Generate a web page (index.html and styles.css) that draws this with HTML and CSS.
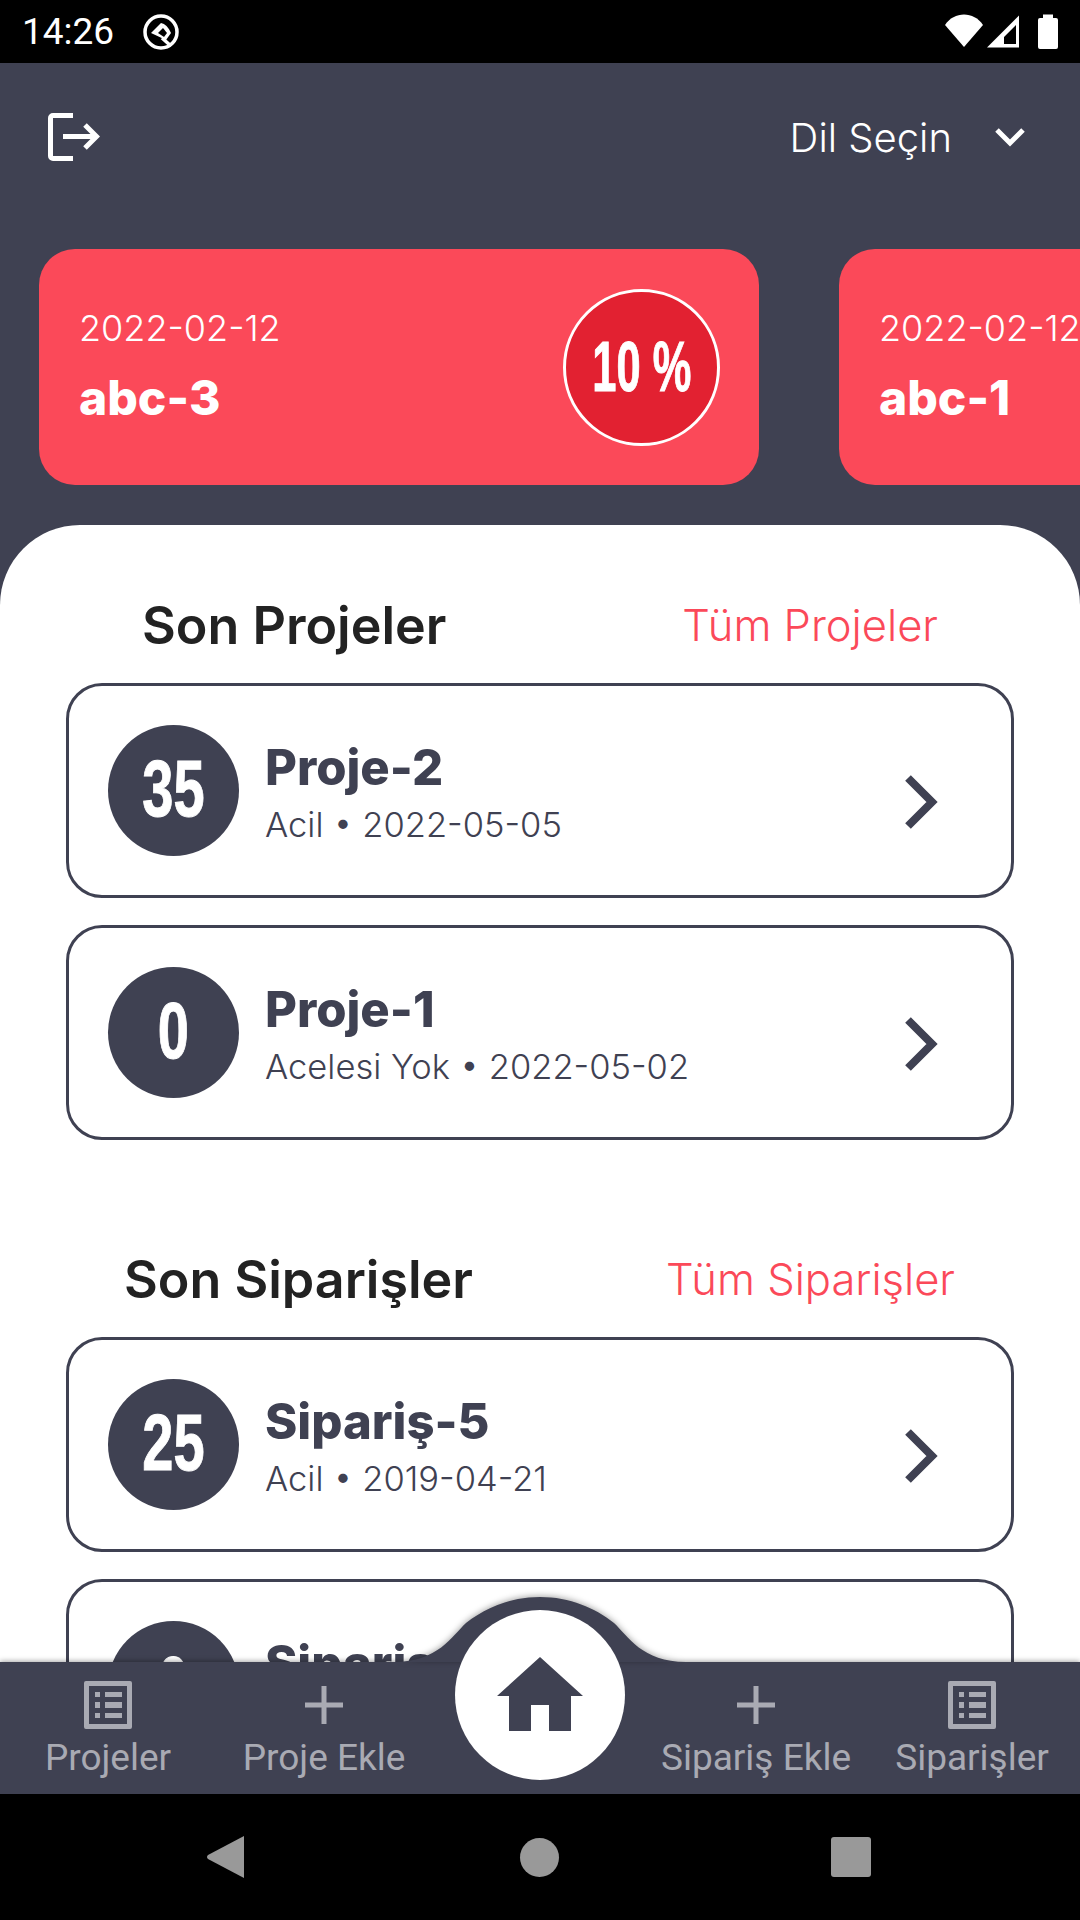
FILE: index.html
```html
<!DOCTYPE html>
<html lang="tr">
<head>
    <meta charset="UTF-8">
    <meta name="viewport" content="width=device-width, initial-scale=1.0">
    <title>Ana Sayfa</title>
    <link rel="stylesheet" href="styles.css">
</head>
<body>
    <div class="status-bar">
        <div class="status-left">
            <span class="status-time">14:26</span>
            <svg class="status-at" width="38" height="38" viewBox="0 0 38 38">
                <circle cx="19" cy="19" r="16" fill="none" stroke="#fff" stroke-width="3.5"/>
                <path d="M9 20 L19 10 Q25 11 29 20 L24 27 Z" fill="#fff"/>
                <path d="M16 20 L21 15 L25 20 L22 24 Z" fill="#000"/>
                <path d="M20 25 L29 33" stroke="#fff" stroke-width="3.5"/>
            </svg>
        </div>
        <svg class="status-icons" width="114" height="38" viewBox="0 0 114 38">
            <path d="M0 12 C9 -2 29 -2 38 12 L19 34 Z" fill="#fff"/>
            <path d="M42 34.5 L74 2.5 V34.5 Z M59 31 H71 V12 L59 24 Z" fill="#fff" fill-rule="evenodd"/>
            <path d="M95 5 H98 V1.5 H108 V5 H111 Q113 5 113 7 V34 Q113 36 111 36 H95 Q93 36 93 34 V7 Q93 5 95 5 Z" fill="#fff"/>
        </svg>
    </div>

    <div class="screen">
        <div class="top-bar">
            <svg class="logout" width="52" height="48" viewBox="0 0 52 48">
                <path d="M25 2.5 H5 A2.5 2.5 0 0 0 2.5 5 V43 A2.5 2.5 0 0 0 5 45.500 H25" fill="none" stroke="#fff" stroke-width="5"/>
                <path d="M15 23.500 H48 M37 12 L48.500 23.500 L37 35" fill="none" stroke="#fff" stroke-width="5"/>
            </svg>
            <div class="lang">
                <span>Dil Seçin</span>
                <svg width="32" height="20" viewBox="0 0 32 20">
                    <path d="M3 3 L16 16 L29 3" fill="none" stroke="#fff" stroke-width="5"/>
                </svg>
            </div>
        </div>

        <div class="cards">
            <div class="card">
                <div>
                    <div class="card-date">2022-02-12</div>
                    <div class="card-name">abc-3</div>
                </div>
                <div class="card-badge"><span>10 %</span></div>
            </div>
            <div class="card">
                <div>
                    <div class="card-date">2022-02-12</div>
                    <div class="card-name">abc-1</div>
                </div>
                <div class="card-badge"><span>10 %</span></div>
            </div>
        </div>

        <div class="sheet">
            <section class="block block-projects">
                <div class="block-head">
                    <h2>Son Projeler</h2>
                    <a>Tüm Projeler</a>
                </div>
                <div class="row">
                    <div class="row-num"><span>35</span></div>
                    <div class="row-text">
                        <div class="row-title">Proje-2</div>
                        <div class="row-sub">Acil • 2022-05-05</div>
                    </div>
                    <svg class="row-arrow" width="36" height="56" viewBox="0 0 36 56"><path d="M5 4 L29 28 L5 52" fill="none" stroke="#3f4152" stroke-width="8"/></svg>
                </div>
                <div class="row">
                    <div class="row-num"><span>0</span></div>
                    <div class="row-text">
                        <div class="row-title">Proje-1</div>
                        <div class="row-sub">Acelesi Yok • 2022-05-02</div>
                    </div>
                    <svg class="row-arrow" width="36" height="56" viewBox="0 0 36 56"><path d="M5 4 L29 28 L5 52" fill="none" stroke="#3f4152" stroke-width="8"/></svg>
                </div>
            </section>

            <section class="block block-orders">
                <div class="block-head">
                    <h2>Son Siparişler</h2>
                    <a>Tüm Siparişler</a>
                </div>
                <div class="row">
                    <div class="row-num"><span>25</span></div>
                    <div class="row-text">
                        <div class="row-title">Sipariş-5</div>
                        <div class="row-sub">Acil • 2019-04-21</div>
                    </div>
                    <svg class="row-arrow" width="36" height="56" viewBox="0 0 36 56"><path d="M5 4 L29 28 L5 52" fill="none" stroke="#3f4152" stroke-width="8"/></svg>
                </div>
                <div class="row">
                    <div class="row-num"><span>0</span></div>
                    <div class="row-text">
                        <div class="row-title">Sipariş-4</div>
                        <div class="row-sub">Acil • 2019-04-21</div>
                    </div>
                    <svg class="row-arrow" width="36" height="56" viewBox="0 0 36 56"><path d="M5 4 L29 28 L5 52" fill="none" stroke="#3f4152" stroke-width="8"/></svg>
                </div>
            </section>
        </div>
    </div>

    <nav class="tabbar">
        <svg class="hump" width="320" height="72" viewBox="0 0 320 72">
            <path d="M14 72 C58 72 72 46 86 33 C105 18 130 7 160 7 C190 7 215 18 234 33 C248 46 262 72 306 72 Z" fill="#3f4152"/>
        </svg>
        <div class="tab">
            <svg width="48" height="48" viewBox="0 0 48 48">
                <path d="M2 0 H46 A2 2 0 0 1 48 2 V46 A2 2 0 0 1 46 48 H2 A2 2 0 0 1 0 46 V2 A2 2 0 0 1 2 0 Z M5 5 V43 H43 V5 Z M11 11 H16 V16 H11 Z M21 11 H38 V16 H21 Z M11 21 H16 V27 H11 Z M21 21 H38 V27 H21 Z M11 32 H16 V37 H11 Z M21 32 H38 V37 H21 Z" fill="#a9aab3" fill-rule="evenodd"/>
            </svg>
            <span>Projeler</span>
        </div>
        <div class="tab">
            <svg width="48" height="48" viewBox="0 0 48 48"><path d="M5 24 H43 M24 5 V43" stroke="#a9aab3" stroke-width="5"/></svg>
            <span>Proje Ekle</span>
        </div>
        <div class="tab-home">
            <svg width="88" height="76" viewBox="0 0 88 76">
                <path d="M44 0 L87 39 H75 V74 H53 V48 H35 V74 H13 V39 H1 Z" fill="#3f4152"/>
            </svg>
        </div>
        <div class="tab">
            <svg width="48" height="48" viewBox="0 0 48 48"><path d="M5 24 H43 M24 5 V43" stroke="#a9aab3" stroke-width="5"/></svg>
            <span>Sipariş Ekle</span>
        </div>
        <div class="tab">
            <svg width="48" height="48" viewBox="0 0 48 48">
                <path d="M2 0 H46 A2 2 0 0 1 48 2 V46 A2 2 0 0 1 46 48 H2 A2 2 0 0 1 0 46 V2 A2 2 0 0 1 2 0 Z M5 5 V43 H43 V5 Z M11 11 H16 V16 H11 Z M21 11 H38 V16 H21 Z M11 21 H16 V27 H11 Z M21 21 H38 V27 H21 Z M11 32 H16 V37 H11 Z M21 32 H38 V37 H21 Z" fill="#a9aab3" fill-rule="evenodd"/>
            </svg>
            <span>Siparişler</span>
        </div>
    </nav>

    <div class="sys-nav">
        <svg width="37" height="42" viewBox="0 0 37 42"><path d="M37 0 V42 L1 23 Q-1 21 1 19 Z" fill="#999"/></svg>
        <div class="sys-circle"></div>
        <div class="sys-square"></div>
    </div>
</body>
</html>
```

FILE: styles.css
```css
* {
    box-sizing: border-box;
}
html, body {
    margin: 0;
    padding: 0;
}
body {
    width: 1080px;
    height: 1920px;
    overflow: hidden;
    display: flex;
    flex-direction: column;
    font-family: 'Inter', sans-serif;
    background-color: #000;
}
.status-bar {
    height: 63px;
    flex: none;
    display: flex;
    justify-content: space-between;
    align-items: center;
    padding: 0 21px 0 22px;
    background-color: #000;
    color: #fff;
}
.status-left {
    display: flex;
    align-items: center;
    gap: 28px;
}
.status-time {
    font-family: 'Roboto', sans-serif;
    font-size: 37px;
}
.screen {
    flex: 1;
    min-height: 0;
    overflow: hidden;
    background-color: #3f4152;
}
.top-bar {
    height: 148px;
    margin-bottom: 38px;
    display: flex;
    justify-content: space-between;
    align-items: center;
    padding: 0 54px 0 48px;
}
.lang {
    display: flex;
    align-items: center;
    gap: 42px;
    color: #fff;
    font-size: 40px;
    font-weight: 300;
}
.cards {
    display: flex;
    gap: 80px;
    padding-left: 39px;
    height: 236px;
    width: 1600px;
}
.card {
    width: 720px;
    flex: none;
    display: flex;
    justify-content: space-between;
    align-items: center;
    padding: 0 39px 0 40px;
    border-radius: 36px;
    background-color: #fb4959;
    color: #fff;
}
.card-date {
    font-size: 36px;
    font-weight: 300;
    line-height: 44px;
}
.card-name {
    font-size: 48px;
    font-weight: 800;
    line-height: 60px;
    margin-top: 18px;
}
.card-badge {
    width: 157px;
    height: 157px;
    border-radius: 50%;
    border: 3px solid #fff;
    background-color: #e22131;
    display: flex;
    align-items: center;
    justify-content: center;
    font-family: 'Liberation Sans', sans-serif;
    font-weight: bold;
    font-size: 70px;
    -webkit-text-stroke: 1px #fff;
}
.card-badge span {
    transform: scaleX(0.62);
    white-space: nowrap;
}
.sheet {
    margin-top: 40px;
    height: 1300px;
    background-color: #fff;
    border-radius: 80px 80px 0 0;
}
.block {
    padding: 0 66px;
}
.block-projects {
    padding-top: 60px;
}
.block-orders {
    padding-top: 72px;
}
.block-head {
    height: 80px;
    display: flex;
    justify-content: space-between;
    align-items: center;
    margin-bottom: 18px;
}
.block-projects .block-head {
    padding: 0 76px;
}
.block-orders .block-head {
    padding: 0 59px 0 58px;
}
.block-head h2 {
    margin: 0;
    font-size: 52px;
    font-weight: 600;
    color: #222;
}
.block-head a {
    font-size: 43.5px;
    font-weight: 300;
    color: #fb4959;
}
.row {
    height: 215px;
    display: flex;
    align-items: center;
    padding: 0 72px 0 39px;
    margin-bottom: 27px;
    border: 3px solid #3f4152;
    border-radius: 36px;
    background-color: #fff;
}
.row-num {
    width: 131px;
    height: 131px;
    flex: none;
    padding-bottom: 4px;
    border-radius: 50%;
    background-color: #3f4152;
    color: #fff;
    display: flex;
    align-items: center;
    justify-content: center;
    font-family: 'Liberation Sans', sans-serif;
    font-weight: bold;
    font-size: 80px;
    -webkit-text-stroke: 1px #fff;
}
.row-num span {
    transform: scaleX(0.7);
}
.row-text {
    flex: 1;
    padding: 5px 0 0 26px;
}
.row-title {
    font-size: 49px;
    font-weight: 800;
    line-height: 54px;
    margin-bottom: 9px;
    color: #3f4152;
}
.row-sub {
    font-size: 34.5px;
    font-weight: 300;
    line-height: 42px;
    color: #3f4152;
}
.row-arrow {
    margin-top: 22px;
}
.tabbar {
    position: relative;
    height: 132px;
    flex: none;
    display: flex;
    align-items: flex-start;
    padding-top: 19px;
    background-color: #3f4152;
    box-shadow: 0 -1px 5px rgba(0, 0, 0, 0.35);
}
.hump {
    position: absolute;
    left: 380px;
    top: -72px;
    filter: drop-shadow(0 -1px 3px rgba(0, 0, 0, 0.35));
}
.tab {
    width: 216px;
    position: relative;
    display: flex;
    flex-direction: column;
    align-items: center;
    gap: 7px;
    font-family: 'Roboto', sans-serif;
    font-size: 37px;
    line-height: 44px;
    white-space: nowrap;
    color: #a9aab3;
}
.tab-home {
    position: relative;
    width: 216px;
    height: 170px;
    margin-top: -71px;
    display: flex;
    justify-content: center;
    align-items: center;
}
.tab-home::before {
    content: "";
    position: absolute;
    left: 23px;
    top: 0;
    width: 170px;
    height: 170px;
    border-radius: 50%;
    background-color: #fff;
}
.tab-home svg {
    position: relative;
}
.sys-nav {
    height: 126px;
    flex: none;
    display: flex;
    align-items: center;
    padding-left: 207px;
    background-color: #000;
}
.sys-circle {
    width: 39px;
    height: 39px;
    border-radius: 50%;
    background-color: #999;
    margin: 0 272px 0 276px;
}
.sys-square {
    width: 40px;
    height: 40px;
    border-radius: 3px;
    background-color: #999;
}
```
